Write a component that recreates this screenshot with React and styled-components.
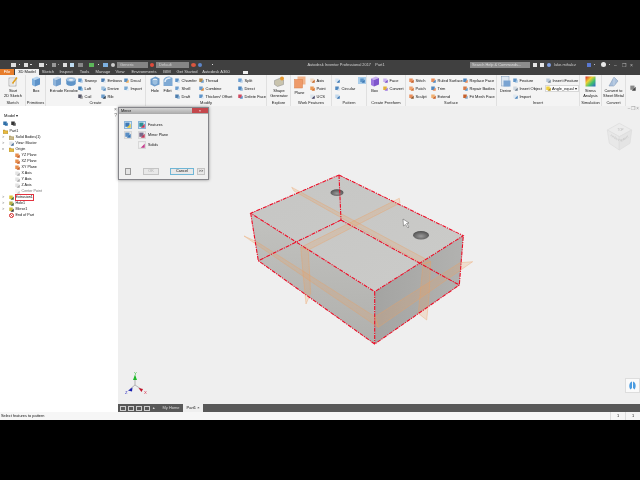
import React from "react";
import styled, { createGlobalStyle } from "styled-components";

const Global = createGlobalStyle`
  html, body { margin: 0; background: #000; }
  body { font-family: "Liberation Sans", Arial, sans-serif; }
`;

const Page = styled.div`
  width: 640px;
  height: 480px;
  display: flex;
  flex-direction: column;
  overflow: hidden;
  background: #000;
  filter: blur(0.25px);
`;
const Letterbox = styled.div`
  height: ${(p) => p.$h}px;
  flex: none;
  background: #000;
`;

/* title bar */
const Header = styled.div`
  height: 15px;
  flex: none;
  background: #404040;
  display: flex;
  flex-direction: column;
`;
const TitleRow = styled.div`
  height: 9px;
  display: flex;
  align-items: center;
`;
const Qat = styled.div`
  width: 240px;
  flex: none;
  display: flex;
  align-items: center;
  gap: 2px;
  padding-left: 11px;
  box-sizing: border-box;
`;
const QatIcon = styled.span`
  width: ${(p) => p.$w || 4}px;
  height: ${(p) => p.$h || 4}px;
  margin-left: ${(p) => p.$m || 0}px;
  flex: none;
  background: ${(p) => p.$c || "#ddd"};
  border-radius: ${(p) => p.$r || 0};
`;
const Combo = styled.span`
  width: ${(p) => p.$w}px;
  height: 6px;
  flex: none;
  margin-left: ${(p) => p.$m || 0}px;
  background: #858585;
  color: #d0d0d0;
  font-size: 4px;
  line-height: 6px;
  padding-left: 3px;
  box-sizing: border-box;
`;
const Title = styled.div`
  flex: 1;
  text-align: center;
  color: #d2d2d2;
  font-size: 3.9px;
  white-space: pre;
`;
const TitleRight = styled.div`
  width: 188px;
  flex: none;
  display: flex;
  align-items: center;
  gap: 3px;
  padding-left: 18px;
  box-sizing: border-box;
`;
const SearchBox = styled.span`
  width: 60px;
  height: 6px;
  flex: none;
  background: #8c8c8c;
  color: #dcdcdc;
  font-size: 3.9px;
  line-height: 6px;
  padding-left: 2px;
  box-sizing: border-box;
  white-space: nowrap;
`;
const UserName = styled.span`
  color: #cacaca;
  font-size: 4px;
  width: 27px;
  flex: none;
  white-space: nowrap;
`;
const WinBtn = styled.span`
  color: #bbb;
  font-size: 5px;
  line-height: 6px;
  width: 5px;
  text-align: center;
`;
const TabRow = styled.div`
  height: 6px;
  display: flex;
  align-items: stretch;
`;
const Tab = styled.span`
  width: ${(p) => p.$w}px;
  flex: none;
  text-align: center;
  font-size: 4.1px;
  line-height: 6px;
  white-space: nowrap;
  color: ${(p) => (p.$active ? "#111" : p.$file ? "#fff" : "#dadada")};
  background: ${(p) => (p.$active ? "#f2f2f2" : p.$file ? "#e77d2b" : "transparent")};
`;
const TabPill = styled.span`
  width: 5px;
  height: 3px;
  margin: 1.5px 0 0 11px;
  background: #eee;
`;

/* ribbon */
const Ribbon = styled.div`
  height: 31px;
  flex: none;
  display: flex;
  background: #f4f4f4;
`;
const PanelBox = styled.div`
  width: ${(p) => p.$w}px;
  flex: none;
  display: flex;
  flex-direction: column;
  box-sizing: border-box;
  border-right: 1px solid #e0e0e0;
`;
const PanelBody = styled.div`
  flex: 1;
  min-height: 0;
  display: flex;
  gap: ${(p) => p.$gap ?? 1}px;
  padding: 1px 0 0 ${(p) => p.$pad ?? 2}px;
`;
const PanelLabel = styled.div`
  height: 6px;
  flex: none;
  text-align: center;
  font-size: 4px;
  line-height: 5px;
  color: #222;
  white-space: nowrap;
`;
const Big = styled.div`
  width: ${(p) => p.$w || 16}px;
  flex: none;
  display: flex;
  flex-direction: column;
  align-items: center;
  color: #111;
  font-size: 3.9px;
  line-height: 5.4px;
  text-align: center;
  white-space: nowrap;
  svg { margin-bottom: 1px; }
`;
const Col = styled.div`
  width: ${(p) => p.$w}px;
  flex: none;
  display: flex;
  flex-direction: column;
  gap: 2px;
  padding-top: 1px;
`;
const ToolRow = styled.div`
  height: 6px;
  display: flex;
  align-items: center;
  gap: 1.5px;
  font-size: 4px;
  color: #111;
  white-space: nowrap;
`;
const PatternToggle = styled.span`
  width: 8px;
  height: 7px;
  display: flex;
  align-items: center;
  justify-content: center;
  background: #a9cdea;
`;
const AngleCombo = styled.div`
  width: 34px;
  height: 7px;
  display: flex;
  align-items: center;
  gap: 1px;
  margin-left: -1px;
  border: 1px solid #d8d8d8;
  box-sizing: border-box;
  background: #fbfbfb;
  font-size: 3.9px;
  color: #111;
  white-space: nowrap;
`;
const Dropdown = styled.div`
  padding: 2px 0 0 4px;
`;

/* work area */
const Work = styled.div`
  flex: 1;
  min-height: 0;
  display: flex;
`;
const Browser = styled.div`
  width: 118px;
  flex: none;
  position: relative;
  background: #fff;
  box-sizing: border-box;
  padding-top: 7px;
`;
const BrowserHead = styled.div`
  font-size: 4.1px;
  line-height: 6px;
  color: #111;
  padding-left: 4px;
`;
const BrowserTools = styled.div`
  display: flex;
  gap: 3px;
  padding: 2px 0 2px 3px;
`;
const BrowserClose = styled.span`
  position: absolute;
  right: 1px;
  top: ${(p) => p.$t}px;
  font-size: 5px;
  color: #777;
`;
const Tree = styled.div`
  display: flex;
  flex-direction: column;
`;
const TreeRow = styled.div`
  height: 6px;
  display: flex;
  align-items: center;
  gap: 1.5px;
  padding-left: ${(p) => 3 + p.$level * 6}px;
  font-size: 3.7px;
  color: ${(p) => (p.$dim ? "#777" : "#111")};
  position: relative;
  white-space: nowrap;
`;
const Twist = styled.span`
  position: absolute;
  left: 2px;
  top: 0;
  font-size: 4px;
  line-height: 6px;
  color: #777;
`;
const Marked = styled.span`
  outline: 0.6px solid #e2333f;
  line-height: 5px;
`;

const Viewport = styled.div`
  flex: 1;
  min-width: 0;
  position: relative;
  background: #efefef;
  display: flex;
  flex-direction: column;
`;
const Canvas = styled.div`
  flex: 1;
  min-height: 0;
  position: relative;
  svg.scene { position: absolute; left: 0; top: 0; }
`;
const WindowBtns = styled.div`
  position: absolute;
  right: 1px;
  top: 0;
  display: flex;
  gap: 1px;
  color: #999;
  font-size: 4.5px;
  line-height: 6px;
`;
const NavButton = styled.div`
  position: absolute;
  right: 0;
  top: 272px;
  width: 15px;
  height: 15px;
  background: #fafafa;
  border: 1px solid #ddd;
  box-sizing: border-box;
  display: flex;
  align-items: center;
  justify-content: center;
`;

/* dialog */
const Dialog = styled.div`
  position: absolute;
  left: 0;
  top: 1px;
  width: 91px;
  height: 73px;
  background: #f0f0f0;
  border: 1px solid #85858a;
  box-sizing: border-box;
  box-shadow: 0 0 3px rgba(0, 0, 0, 0.4);
  display: flex;
  flex-direction: column;
`;
const DialogTitle = styled.div`
  height: 6px;
  flex: none;
  display: flex;
  justify-content: space-between;
  background: linear-gradient(#d4d4d4, #a9a9a9);
  font-size: 3.8px;
  line-height: 6px;
  color: #111;
  padding-left: 2px;
`;
const CloseBtn = styled.span`
  width: 16px;
  height: 5px;
  background: #c4474c;
  color: #fff;
  text-align: center;
  font-size: 4px;
  line-height: 5px;
`;
const DialogBody = styled.div`
  flex: 1;
  display: flex;
  padding: 7px 0 0 5px;
  gap: 5px;
`;
const ModeCol = styled.div`
  width: 9px;
  display: flex;
  flex-direction: column;
  gap: 2px;
`;
const ModeBtn = styled.span`
  width: 8px;
  height: 8px;
  display: flex;
  align-items: center;
  justify-content: center;
  border: 1px solid ${(p) => (p.$on ? "#8ab4d8" : "#d8d8d8")};
  background: ${(p) => (p.$on ? "#d3e6f5" : "#e9e9e9")};
  box-sizing: border-box;
`;
const ItemCol = styled.div`
  display: flex;
  flex-direction: column;
  gap: 2px;
`;
const Item = styled.div`
  height: 8px;
  display: flex;
  align-items: center;
  gap: 2px;
  font-size: 3.7px;
  color: #111;
`;
const DialogFoot = styled.div`
  height: 7px;
  flex: none;
  display: flex;
  align-items: center;
  padding: 0 3px 4px 6px;
`;
const HelpBtn = styled.span`
  width: 7px;
  height: 7px;
  border: 1px solid #999;
  box-sizing: border-box;
  background: #e4e4e4;
  margin-right: 12px;
`;
const DlgBtn = styled.span`
  width: ${(p) => p.$w}px;
  height: 7px;
  flex: none;
  margin-right: ${(p) => p.$m || 0}px;
  box-sizing: border-box;
  border: 1px solid ${(p) => (p.$primary ? "#6fb6d6" : "#c4c4c4")};
  background: #e8e8e8;
  color: ${(p) => (p.$off ? "#aaa" : "#111")};
  text-align: center;
  font-size: 3.8px;
  line-height: 5px;
`;

/* bottom bars */
const DocBar = styled.div`
  height: 8px;
  flex: none;
  display: flex;
  align-items: stretch;
  background: #585858;
  color: #d8d8d8;
  font-size: 4px;
  line-height: 8px;
`;
const DocIcons = styled.div`
  display: flex;
  align-items: center;
  gap: 2px;
  padding-left: 2px;
  width: 41px;
  box-sizing: border-box;
  font-size: 3.5px;
`;
const DocIcon = styled.span`
  width: 6px;
  height: 5px;
  border: 1px solid #ccc;
  box-sizing: border-box;
`;
const DocTab = styled.span`
  width: ${(p) => p.$w}px;
  flex: none;
  text-align: center;
  color: ${(p) => (p.$active ? "#111" : "#d8d8d8")};
  background: ${(p) => (p.$active ? "#efefef" : "transparent")};
  margin-right: ${(p) => p.$m || 0}px;
`;
const StatusBar = styled.div`
  height: 8px;
  flex: none;
  display: flex;
  justify-content: space-between;
  background: #f6f6f6;
  font-size: 3.9px;
  line-height: 8px;
  color: #111;
  padding-left: 1px;
`;
const StatusCells = styled.div`
  display: flex;
`;
const StatusCell = styled.span`
  width: 15px;
  text-align: center;
  border-left: 1px solid #ddd;
  box-sizing: border-box;
`;

/* icons */
const Small = ({ a = "#4a90c8", b = "#f0a040", s = 5 }) => (
  <svg width={s} height={s} viewBox="0 0 10 10" style={{ flex: "none" }}>
    <rect x="0.5" y="1" width="7" height="7" fill={a} />
    <path d="M3 9.5 9.5 9.5 9.5 3Z" fill={b} />
  </svg>
);

const Cube = ({ w = 10, h = 11, top = "#b8d6f0", left = "#7fb0de", right = "#5d92c8" }) => (
  <svg width={w} height={h} viewBox="0 0 20 22">
    <path d="M2 5 12 1 18 4 8 8Z" fill={top} />
    <path d="M2 5 8 8V21L2 18Z" fill={left} />
    <path d="M8 8 18 4V17L8 21Z" fill={right} />
  </svg>
);

const SketchIcon = () => (
  <svg width="10" height="11" viewBox="0 0 20 22">
    <rect x="2" y="4" width="14" height="16" fill="#fff" stroke="#777" />
    <path d="M4 8H13M4 12H10M4 16H13" stroke="#999" />
    <path d="M9 15 18 3" stroke="#e0a020" strokeWidth="3" />
  </svg>
);

const Revolve = () => (
  <svg width="12" height="11" viewBox="0 0 28 22">
    <ellipse cx="14" cy="7" rx="11" ry="5" fill="#a4c6e6" stroke="#6d8fb0" />
    <path d="M3 7V17C6 23 22 23 25 17V7C22 13 6 13 3 7Z" fill="#5f94c8" />
    <ellipse cx="14" cy="7" rx="5" ry="2" fill="#eef4f9" />
  </svg>
);

const HoleIcon = () => (
  <svg width="10" height="11" viewBox="0 0 20 22">
    <path d="M1 6 11 1 19 5V17L9 21 1 17Z" fill="#6d9ccb" />
    <ellipse cx="10" cy="8" rx="5" ry="3" fill="#e4eef7" />
    <path d="M5 8V15L10 18 15 15V8" fill="#9cbfdf" />
  </svg>
);

const FilletIcon = () => (
  <svg width="10" height="11" viewBox="0 0 20 22">
    <path d="M1 20V9C1 4 7 1 13 1L19 4V20Z" fill="#7ea9d4" />
    <path d="M4 12C4 7 9 4 15 4" stroke="#e4eef7" strokeWidth="3" fill="none" />
  </svg>
);

const ShapeGen = () => (
  <svg width="12" height="11" viewBox="0 0 24 22">
    <path d="M3 9 15 4 21 8V17L9 21 3 17Z" fill="#c9c4ae" stroke="#888" />
    <circle cx="18" cy="5" r="4" fill="#e59a33" />
  </svg>
);

const PlaneIcon = () => (
  <svg width="12" height="13" viewBox="0 0 24 26">
    <rect x="7" y="1" width="16" height="16" fill="#f2b48b" />
    <rect x="1" y="7" width="16" height="17" fill="#ee9a69" stroke="#d77e48" />
  </svg>
);

const StressIcon = () => (
  <svg width="11" height="11" viewBox="0 0 22 22">
    <defs>
      <linearGradient id="stress" x1="0" y1="0" x2="1" y2="1">
        <stop offset="0" stopColor="#d8202a" />
        <stop offset="0.35" stopColor="#f0d030" />
        <stop offset="0.65" stopColor="#40c070" />
        <stop offset="1" stopColor="#3060d0" />
      </linearGradient>
    </defs>
    <rect x="1" y="1" width="20" height="20" fill="url(#stress)" />
  </svg>
);

const ConvertIcon = () => (
  <svg width="11" height="11" viewBox="0 0 22 22">
    <path d="M2 20 12 2 20 10 12 20Z" fill="#a9c0dc" stroke="#7890b0" />
    <path d="M12 2V20" stroke="#e0e8f2" />
  </svg>
);

const DeriveIcon = () => (
  <svg width="10" height="11" viewBox="0 0 20 22">
    <rect x="1" y="1" width="15" height="19" fill="#dfe8f2" stroke="#7f9cbc" />
    <rect x="5" y="9" width="14" height="12" fill="#7aa4d2" />
  </svg>
);

const Folder = ({ c = "#e8b93e" }) => (
  <svg width="5" height="5" viewBox="0 0 10 10" style={{ flex: "none" }}>
    <path d="M0 2H4L5 3.5H10V9.5H0Z" fill={c} stroke="#8d7020" strokeWidth="0.7" />
  </svg>
);

const tool = (label, a, b) => ({ label, a, b });

const Tools = ({ w, items }) => (
  <Col $w={w}>
    {items.map((t, i) => (
      <ToolRow key={i}>
        <Small a={t.a} b={t.b} />
        {t.label}
      </ToolRow>
    ))}
  </Col>
);

const Panel = ({ w, label, pad, gap, children }) => (
  <PanelBox $w={w}>
    <PanelBody $pad={pad} $gap={gap}>
      {children}
    </PanelBody>
    <PanelLabel>{label}</PanelLabel>
  </PanelBox>
);

const treeRows = [
  { text: "Part1", level: 0, icon: <Folder /> },
  { text: "Solid Bodies(1)", level: 1, twist: ">", icon: <Folder c="#c9b98a" /> },
  { text: "View: Master", level: 1, twist: ">", icon: <Small a="#dfe4ea" b="#4c6f96" /> },
  { text: "Origin", level: 1, twist: "v", icon: <Folder /> },
  { text: "YZ Plane", level: 2, icon: <Small a="#e88f4d" b="#c55f2b" /> },
  { text: "XZ Plane", level: 2, icon: <Small a="#e88f4d" b="#c55f2b" /> },
  { text: "XY Plane", level: 2, icon: <Small a="#e88f4d" b="#c55f2b" /> },
  { text: "X Axis", level: 2, icon: <Small a="#e4e4e4" b="#aaaaaa" /> },
  { text: "Y Axis", level: 2, icon: <Small a="#e4e4e4" b="#aaaaaa" /> },
  { text: "Z Axis", level: 2, icon: <Small a="#e4e4e4" b="#aaaaaa" /> },
  { text: "Center Point", level: 2, dim: true, icon: <Small a="#f4f4f4" b="#cccccc" /> },
  { text: "Extrusion1", level: 1, twist: ">", mark: true, icon: <Small a="#dcc63a" b="#47683a" /> },
  { text: "Hole1", level: 1, twist: ">", icon: <Small a="#b8b048" b="#4a6d3c" /> },
  { text: "Mirror1", level: 1, twist: ">", icon: <Small a="#cfc040" b="#3e3e3e" /> },
  {
    text: "End of Part",
    level: 1,
    icon: (
      <svg width="5" height="5" viewBox="0 0 10 10" style={{ flex: "none" }}>
        <circle cx="5" cy="5" r="4" fill="#fff" stroke="#d42b2b" strokeWidth="2" />
        <path d="M2.5 2.5 7.5 7.5" stroke="#d42b2b" strokeWidth="1.6" />
      </svg>
    ),
  },
];

const PLANE = "#ef9f5e";

/* viewBox uses screen coordinates so the model can be read straight off the reference */
const Model = () => (
  <svg className="scene" width="522" height="298" viewBox="118 106 522 298">
    <defs>
      <radialGradient id="holeFill" cx="0.5" cy="0.6" r="0.6">
        <stop offset="0" stopColor="#9a9a9a" />
        <stop offset="1" stopColor="#4e4e4e" />
      </radialGradient>
      <linearGradient id="leftFace" x1="0" y1="0" x2="0" y2="1">
        <stop offset="0" stopColor="#c2c2bf" />
        <stop offset="1" stopColor="#b0b0ad" />
      </linearGradient>
      <linearGradient id="rightFace" x1="0" y1="0" x2="1" y2="0">
        <stop offset="0" stopColor="#a4a4a2" />
        <stop offset="1" stopColor="#b2b2b0" />
      </linearGradient>
      <linearGradient id="topFace" x1="0" y1="0" x2="1" y2="1">
        <stop offset="0" stopColor="#c6c6c4" />
        <stop offset="1" stopColor="#cbcbc9" />
      </linearGradient>
    </defs>
    <polygon points="339,175 463.3,235.7 374.7,291.7 250.7,213.3" fill="url(#topFace)" />
    <polygon points="250.7,213.3 374.7,291.7 374.7,344 258.3,260.7" fill="url(#leftFace)" />
    <polygon points="374.7,291.7 463.3,235.7 459.3,285 374.7,344" fill="url(#rightFace)" />

    <ellipse cx="337" cy="192.7" rx="6.5" ry="3.4" fill="url(#holeFill)" />
    <ellipse cx="421" cy="235.3" rx="8" ry="4.2" fill="url(#holeFill)" />

    <g fill={PLANE} fillOpacity="0.22" stroke={PLANE} strokeOpacity="0.6" strokeWidth="0.6">
      <polygon points="244,236 378.3,327.3 375,316.7 256.7,241.7" />
      <polygon points="378.3,327.3 472.7,261.7 460,262.7 375,316.7" />
      <polygon points="291.7,187.3 294,191 423,264 430.7,261.7" />
      <polygon points="423,264 430.7,261.7 429,296.7 426.7,320 418.3,313.3" />
      <polygon points="399.3,198.3 400,203 308.3,250 300.7,247.3" />
      <polygon points="300.7,247.3 308.3,250 310.7,293.3 306,304 303.3,276.7" />
    </g>

    <g fill="none" stroke="#ee0a24" strokeWidth="1.1" strokeDasharray="4 1 1.2 1">
      <path d="M339 175 463.3 235.7 374.7 291.7 250.7 213.3Z" />
      <path d="M250.7 213.3 258.3 260.7 374.7 344 459.3 285 463.3 235.7" />
      <path d="M374.7 291.7V344" />
      <path d="M339 175 341 220M341 220 258.3 260.7M341 220 459.3 285" />
    </g>

    <path d="M403 219 403.5 226 405.5 224.5 408 228 409 227 406.5 223.5 409 223Z" fill="#fff" stroke="#555" strokeWidth="0.5" />

    {/* view cube */}
    <g stroke="#dcdcdc" strokeWidth="0.7">
      <path d="M619.3 123.3 631.7 130 619.3 136.7 607.3 130Z" fill="#ececec" />
      <path d="M607.3 130 619.3 136.7V150L609.3 143.3Z" fill="#e8e8e8" />
      <path d="M631.7 130 619.3 136.7V150L630 143.3Z" fill="#e4e4e4" />
    </g>
    <g fill="#bcbcbc" fontSize="3" fontFamily="Liberation Sans">
      <text transform="translate(610 136) rotate(32)">FRONT</text>
      <text transform="translate(621 142) rotate(-30)">RIGHT</text>
      <text x="617.5" y="131">TOP</text>
    </g>

    {/* axis triad */}
    <path d="M135 385V378M135 385 130 389M135 385 141 389" stroke="#999" strokeWidth="0.7" />
    <path d="M135 374.5 137 380H133Z" fill="#1fb82a" />
    <path d="M132.5 387.5 132 391.5 128 390.5Z" fill="#1a1fb0" />
    <path d="M138.5 388 143 389 141.5 392Z" fill="#c3142b" />
    <g fontSize="4.2" fontFamily="Liberation Sans">
      <text x="134" y="375" fill="#1fb82a">Y</text>
      <text x="125" y="393.5" fill="#2a2ac0">Z</text>
      <text x="144" y="393.5" fill="#d41c3a">X</text>
    </g>
  </svg>
);

export default function App() {
  return (
    <Page>
      <Global />
      <Letterbox $h={60} />
      <Header>
        <TitleRow>
          <Qat>
            <QatIcon $w={5} />
            <QatIcon $w={1} $h={1} $m={1} />
            <QatIcon $m={2} />
            <QatIcon $w={2} $h={1} />
            <QatIcon $m={5} $w={5} />
            <QatIcon $w={1} $h={1} />
            <QatIcon $m={3} $w={4} $c="#999" />
            <QatIcon $w={1} $h={1} $c="#999" />
            <QatIcon $m={2} $w={4} />
            <QatIcon $m={1} $w={4} $c="#bfdcf2" />
            <QatIcon $m={2} $w={5} $c="#888" />
            <QatIcon $m={4} $w={5} $c="#5db65a" />
            <QatIcon $m={2} $w={1} $h={1} />
            <QatIcon $m={2} $w={5} $c="#7db0e0" />
            <QatIcon $m={1} $w={4} $c="#ccc" $r="50%" />
            <Combo $w={31}>Generic</Combo>
            <QatIcon $w={4} $c="#e04a3a" $r="50%" />
            <Combo $w={33}>Default</Combo>
            <QatIcon $w={5} $c="#d9563f" $r="50%" />
            <QatIcon $w={4} $c="#5d86c9" $r="50%" />
            <QatIcon $w={1} $h={1} $m={8} />
          </Qat>
          <Title>{"Autodesk Inventor Professional 2017    Part1"}</Title>
          <TitleRight>
            <SearchBox>Search Help &amp; Commands...</SearchBox>
            <QatIcon $c="#e6e6e6" />
            <QatIcon $c="#e6e6e6" />
            <QatIcon $c="#7f9ee0" $r="50%" />
            <UserName>luke.mihalcz</UserName>
            <QatIcon $m={3} $c="#5a78d0" />
            <QatIcon $w={1} $h={1} $c="#bbb" />
            <QatIcon $m={3} $w={5} $h={5} $c="#e8e8e8" $r="50%" />
            <QatIcon $w={1} $h={1} $c="#bbb" />
            <WinBtn>–</WinBtn>
            <WinBtn>❐</WinBtn>
            <WinBtn>×</WinBtn>
          </TitleRight>
        </TitleRow>
        <TabRow>
          <Tab $w={14} $file>File</Tab>
          <Tab $w={1} />
          <Tab $w={24} $active>3D Model</Tab>
          <Tab $w={18}>Sketch</Tab>
          <Tab $w={18}>Inspect</Tab>
          <Tab $w={19}>Tools</Tab>
          <Tab $w={18}>Manage</Tab>
          <Tab $w={16}>View</Tab>
          <Tab $w={32}>Environments</Tab>
          <Tab $w={14}>BIM</Tab>
          <Tab $w={26}>Get Started</Tab>
          <Tab $w={32}>Autodesk A360</Tab>
          <TabPill />
        </TabRow>
      </Header>

      <Ribbon>
        <Panel w={26} label="Sketch" pad={5}>
          <Big $w={16}>
            <SketchIcon />
            Start
            <br />
            2D Sketch
          </Big>
        </Panel>
        <Panel w={20} label="Primitives" pad={2}>
          <Big $w={16}>
            <Cube />
            Box
          </Big>
        </Panel>
        <Panel w={100} label="Create" pad={3} gap={0}>
          <Big $w={15}>
            <Cube w={12} top="#c6d8ea" left="#8fb4da" right="#6f9ccb" />
            Extrude
          </Big>
          <Big $w={14}>
            <Revolve />
            Revolve
          </Big>
          <Tools w={23} items={[tool("Sweep", "#5c96cc", "#aac8e6"), tool("Loft", "#3f7fb8", "#7fb4de"), tool("Coil", "#556", "#999")]} />
          <Tools w={23} items={[tool("Emboss", "#4f80b4", "#d8e4ef"), tool("Derive", "#9cc0de", "#5a8fc2"), tool("Rib", "#6b9ccb", "#345")]} />
          <Tools w={18} items={[tool("Decal", "#5b8fc0", "#f0b060"), tool("Import", "#7aa9d2", "#e0ecf6")]} />
        </Panel>
        <Panel w={121} label="Modify" pad={4} gap={2}>
          <Big $w={10}>
            <HoleIcon />
            Hole
          </Big>
          <Big $w={11}>
            <FilletIcon />
            Fillet
          </Big>
          <Tools w={22} items={[tool("Chamfer", "#5f94c8", "#c4daee"), tool("Shell", "#6c9ed0", "#dbe8f3"), tool("Draft", "#4d7eae", "#8cb4d8")]} />
          <Tools w={37} items={[tool("Thread", "#b08a50", "#6c9ed0"), tool("Combine", "#6c9ed0", "#e08a3a"), tool("Thicken/ Offset", "#5f94c8", "#e0e8f0")]} />
          <Tools w={26} items={[tool("Split", "#6c9ed0", "#b8d0e8"), tool("Direct", "#4d86c0", "#8cb4d8"), tool("Delete Face", "#d04a60", "#5f94c8")]} />
        </Panel>
        <Panel w={24} label="Explore" pad={2}>
          <Big $w={20}>
            <ShapeGen />
            Shape
            <br />
            Generator
          </Big>
        </Panel>
        <Panel w={41} label="Work Features" pad={2} gap={4}>
          <Big $w={13}>
            <PlaneIcon />
            Plane
          </Big>
          <Tools w={20} items={[tool("Axis", "#f0d8c0", "#c76a2a"), tool("Point", "#ea9a55", "#d67430"), tool("UCS", "#dde6ee", "#446")]} />
        </Panel>
        <Panel w={35} label="Pattern" pad={3} gap={2}>
          <Tools w={21} items={[tool("", "#d6e6f4", "#3d78b4"), tool("Circular", "#4f88c0", "#cfe0f0"), tool("", "#c2d8ec", "#3d78b4")]} />
          <Col $w={8}>
            <PatternToggle>
              <Small a="#5e95c8" b="#3d78b4" s={5} />
            </PatternToggle>
          </Col>
        </Panel>
        <Panel w={39} label="Create Freeform" pad={2} gap={3}>
          <Big $w={11}>
            <Cube top="#c9b3ef" left="#9c77de" right="#7f56cc" />
            Box
          </Big>
          <Tools w={22} items={[tool("Face", "#c9b3ef", "#7f56cc"), tool("Convert", "#e4b13a", "#9c77de")]} />
        </Panel>
        <Panel w={91} label="Surface" pad={3} gap={1}>
          <Tools w={21} items={[tool("Stitch", "#e98d5a", "#c7602a"), tool("Patch", "#efa36f", "#d27438"), tool("Sculpt", "#e98d5a", "#8a5a30")]} />
          <Tools w={31} items={[tool("Ruled Surface", "#e98d5a", "#4f88c0"), tool("Trim", "#4f88c0", "#e98d5a"), tool("Extend", "#f0b070", "#c7602a")]} />
          <Tools w={32} items={[tool("Replace Face", "#4f88c0", "#e98d5a"), tool("Repair Bodies", "#d87c4a", "#5c9bd0"), tool("Fit Mesh Face", "#c7602a", "#8aa8c4")]} />
        </Panel>
        <Panel w={83} label="Insert" pad={3} gap={2}>
          <Big $w={11}>
            <DeriveIcon />
            Derive
          </Big>
          <Tools w={31} items={[tool("Feature", "#5f94c8", "#a8c8e4"), tool("Insert Object", "#cfd8e0", "#708090"), tool("Import", "#dfe8f0", "#4f88c0")]} />
          <Col $w={34}>
            <ToolRow>
              <Small a="#bccbdb" b="#7a8a9a" />
              Insert iFeature
            </ToolRow>
            <AngleCombo>
              <Small a="#f0d040" b="#b89820" />
              Angle_equal ▾
            </AngleCombo>
          </Col>
        </Panel>
        <Panel w={22} label="Simulation" pad={0}>
          <Big $w={21}>
            <StressIcon />
            Stress
            <br />
            Analysis
          </Big>
        </Panel>
        <Panel w={24} label="Convert" pad={0}>
          <Big $w={23}>
            <ConvertIcon />
            Convert to
            <br />
            Sheet Metal
          </Big>
        </Panel>
        <Dropdown>
          <Small a="#888" b="#444" s={6} />
        </Dropdown>
      </Ribbon>

      <Work>
        <Browser>
          <BrowserClose $t={0}>×</BrowserClose>
          <BrowserClose $t={6}>?</BrowserClose>
          <BrowserHead>Model ▾</BrowserHead>
          <BrowserTools>
            <Small a="#2f6fa8" b="#2f6fa8" />
            <Small a="#333" b="#555" />
          </BrowserTools>
          <Tree>
            {treeRows.map((r) => (
              <TreeRow key={r.text} $level={r.level} $dim={r.dim}>
                {r.twist && <Twist>{r.twist}</Twist>}
                {r.icon}
                {r.mark ? <Marked>{r.text}</Marked> : r.text}
              </TreeRow>
            ))}
          </Tree>
        </Browser>
        <Viewport>
          <Canvas>
            <Model />
            <WindowBtns>
              <span>–</span>
              <span>❐</span>
              <span>×</span>
            </WindowBtns>
            <Dialog>
              <DialogTitle>
                Mirror
                <CloseBtn>×</CloseBtn>
              </DialogTitle>
              <DialogBody>
                <ModeCol>
                  <ModeBtn $on>
                    <Small a="#3b78b8" b="#e8c83a" s={6} />
                  </ModeBtn>
                  <ModeBtn>
                    <Small a="#5a8ec4" b="#3b78b8" s={6} />
                  </ModeBtn>
                </ModeCol>
                <ItemCol>
                  <Item>
                    <ModeBtn $on>
                      <Small a="#2f8f96" b="#c43a5a" s={6} />
                    </ModeBtn>
                    Features
                  </Item>
                  <Item>
                    <ModeBtn>
                      <Small a="#7a6a8a" b="#c43a5a" s={6} />
                    </ModeBtn>
                    Mirror Plane
                  </Item>
                  <Item>
                    <ModeBtn>
                      <Small a="#f4f4f4" b="#c43a8a" s={6} />
                    </ModeBtn>
                    Solids
                  </Item>
                </ItemCol>
              </DialogBody>
              <DialogFoot>
                <HelpBtn />
                <DlgBtn $w={16} $m={11} $off>OK</DlgBtn>
                <DlgBtn $w={24} $m={3} $primary>Cancel</DlgBtn>
                <DlgBtn $w={8}>&gt;&gt;</DlgBtn>
              </DialogFoot>
            </Dialog>
            <NavButton>
              <svg width="9" height="10" viewBox="0 0 18 20">
                <path d="M8 1C2 3 1 12 5 17L8 14ZM10 1C16 3 17 12 13 17L10 14Z" fill="#4a9be0" />
              </svg>
            </NavButton>
          </Canvas>
          <DocBar>
            <DocIcons>
              <DocIcon />
              <DocIcon />
              <DocIcon />
              <DocIcon />
              ▲
            </DocIcons>
            <DocTab $w={24}>My Home</DocTab>
            <DocTab $w={20} $active $m={1}>Part1 ×</DocTab>
          </DocBar>
        </Viewport>
      </Work>
      <StatusBar>
        Select features to pattern
        <StatusCells>
          <StatusCell>1</StatusCell>
          <StatusCell>1</StatusCell>
        </StatusCells>
      </StatusBar>
      <Letterbox $h={60} />
    </Page>
  );
}
